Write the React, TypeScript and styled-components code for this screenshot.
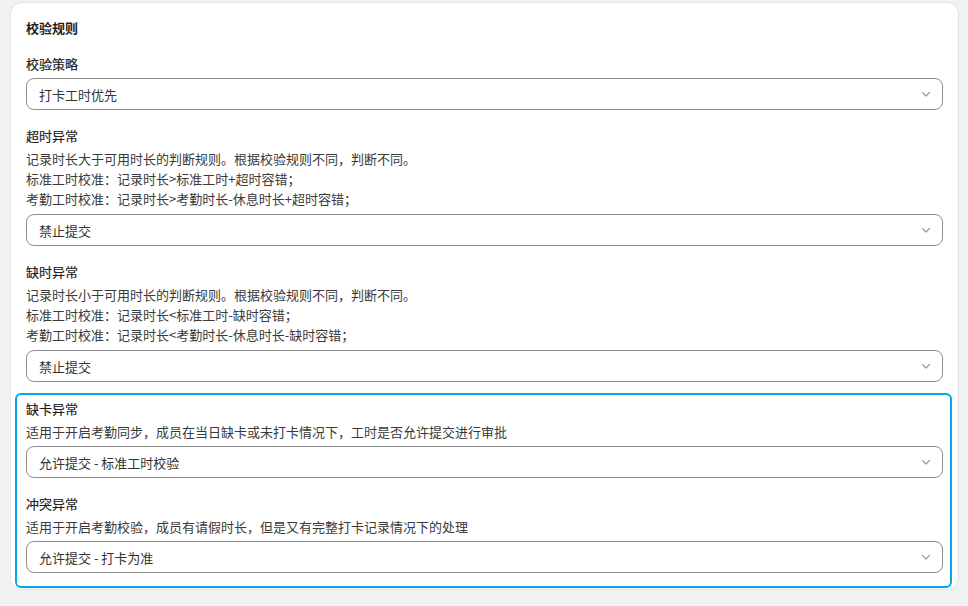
import styled, { createGlobalStyle } from "styled-components";

const GlobalStyle = createGlobalStyle`
  body {
    margin: 0;
    background: #f1f2f4;
    font-family: "Noto Sans CJK SC", "Noto Sans", sans-serif;
    color: #262626;
  }
`;

const Page = styled.div`
  padding: 2px 9px 14px 10px;
`;

const Card = styled.div`
  background: #fff;
  border: 1px solid #e3e4e6;
  border-radius: 12px;
  padding: 15px 15px 1px 15px;
  display: flex;
  flex-direction: column;
  gap: 16px;
`;

const Title = styled.h3`
  margin: 0;
  font-size: 13px;
  line-height: 20px;
  font-weight: 700;
  color: #1f1f1f;
`;

const Section = styled.div`
  display: flex;
  flex-direction: column;
`;

const Highlight = styled.div`
  margin: -5px -9px 0 -11px;
  border: 2px solid #05a6f0;
  border-radius: 6px;
  padding: 4px 7px 13px 9px;
  display: flex;
  flex-direction: column;
  gap: 16px;
`;

/* medium weight isn't installed, so thicken the regular face a little */
const Label = styled.div`
  font-size: 13px;
  line-height: 20px;
  font-weight: 400;
  -webkit-text-stroke: 0.2px #1f1f1f;
  color: #1f1f1f;
  margin-bottom: 4px;
`;

const Desc = styled.div<{ $compact?: boolean }>`
  font-size: 13px;
  line-height: 20px;
  color: #3a3a3a;
  margin-top: -1px;
  margin-bottom: ${(p) => (p.$compact ? 4 : 5)}px;
`;

const SelectBox = styled.div`
  height: 32px;
  box-sizing: border-box;
  border: 1px solid #8c8c8c;
  border-radius: 8px;
  padding: 0 10px 0 12px;
  display: flex;
  align-items: center;
  justify-content: space-between;
  font-size: 13px;
  color: #333;
`;

const Chevron = () => (
  <svg width="12" height="12" viewBox="0 0 12 12" fill="none">
    <path d="M2.5 4.5L6 8L9.5 4.5" stroke="#9a9ca3" strokeWidth="1.2" strokeLinecap="round" strokeLinejoin="round" />
  </svg>
);

const Select = ({ value }: { value: string }) => (
  <SelectBox>
    <span>{value}</span>
    <Chevron />
  </SelectBox>
);

type RuleData = { label: string; desc: string[]; value: string };

const rules: RuleData[] = [
  {
    label: "超时异常",
    desc: [
      "记录时长大于可用时长的判断规则。根据校验规则不同，判断不同。",
      "标准工时校准：记录时长>标准工时+超时容错；",
      "考勤工时校准：记录时长>考勤时长-休息时长+超时容错；",
    ],
    value: "禁止提交",
  },
  {
    label: "缺时异常",
    desc: [
      "记录时长小于可用时长的判断规则。根据校验规则不同，判断不同。",
      "标准工时校准：记录时长<标准工时-缺时容错；",
      "考勤工时校准：记录时长<考勤时长-休息时长-缺时容错；",
    ],
    value: "禁止提交",
  },
];

const highlighted: RuleData[] = [
  {
    label: "缺卡异常",
    desc: ["适用于开启考勤同步，成员在当日缺卡或未打卡情况下，工时是否允许提交进行审批"],
    value: "允许提交 - 标准工时校验",
  },
  {
    label: "冲突异常",
    desc: ["适用于开启考勤校验，成员有请假时长，但是又有完整打卡记录情况下的处理"],
    value: "允许提交 - 打卡为准",
  },
];

const Rule = ({ label, desc, value, compact }: RuleData & { compact?: boolean }) => (
  <Section>
    <Label>{label}</Label>
    <Desc $compact={compact}>
      {desc.map((line) => (
        <div key={line}>{line}</div>
      ))}
    </Desc>
    <Select value={value} />
  </Section>
);

export default function App() {
  return (
    <Page>
      <GlobalStyle />
      <Card>
        <Title>校验规则</Title>
        <Section>
          <Label>校验策略</Label>
          <Select value="打卡工时优先" />
        </Section>
        {rules.map((r) => (
          <Rule key={r.label} {...r} />
        ))}
        <Highlight>
          {highlighted.map((r) => (
            <Rule key={r.label} {...r} compact />
          ))}
        </Highlight>
      </Card>
    </Page>
  );
}
